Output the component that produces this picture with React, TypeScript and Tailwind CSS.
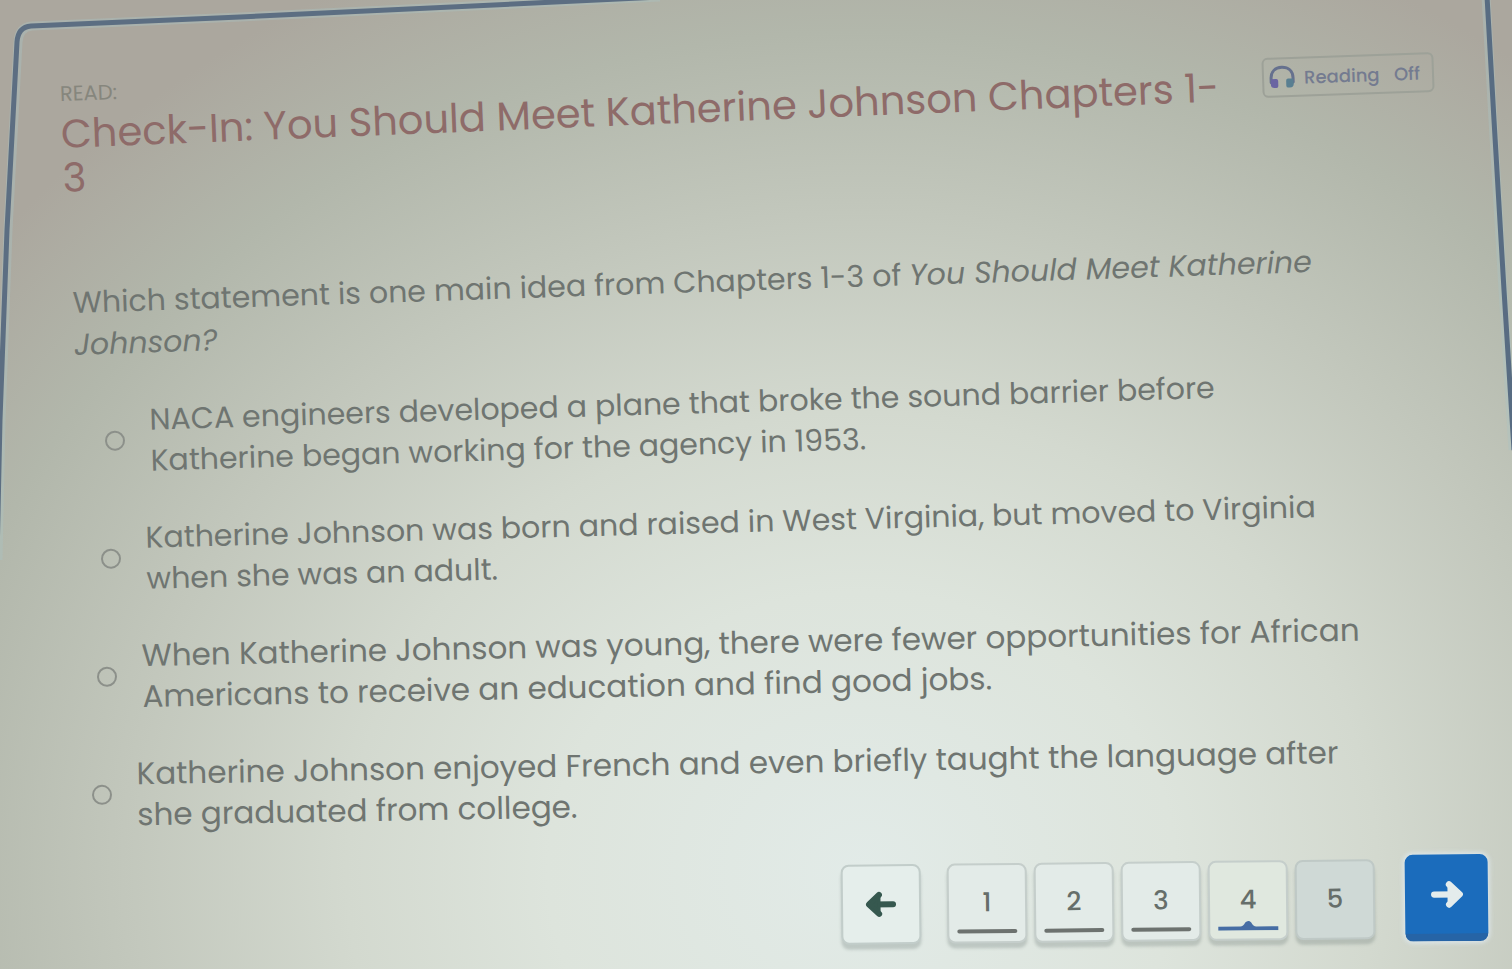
import { useState } from "react";

const options = [
  {
    id: "naca",
    lines: [
      "NACA engineers developed a plane that broke the sound barrier before",
      "Katherine began working for the agency in 1953.",
    ],
    row: "ml-[105px] -rotate-[1.7deg] text-[30px]",
  },
  {
    id: "virginia",
    lines: [
      "Katherine Johnson was born and raised in West Virginia, but moved to Virginia",
      "when she was an adult.",
    ],
    row: "ml-[101px] -rotate-[1.5deg] text-[30px]",
  },
  {
    id: "opportunities",
    lines: [
      "When Katherine Johnson was young, there were fewer opportunities for African",
      "Americans to receive an education and find good jobs.",
    ],
    row: "ml-[97px] -rotate-[1.2deg] text-[31px]",
  },
  {
    id: "french",
    lines: [
      "Katherine Johnson enjoyed French and even briefly taught the language after",
      "she graduated from college.",
    ],
    row: "ml-[92px] -rotate-[1deg] text-[31px]",
  },
];

function Headphones() {
  return (
    <svg viewBox="0 0 28 26" className="h-[26px] w-7 shrink-0" fill="none" aria-hidden="true">
      <path d="M3 18v-4C3 7 7.500 3 14 3s11 4 11 11v4" stroke="#66718e" strokeWidth="3" strokeLinecap="round" />
      <path d="M3 14.500h5a2 2 0 0 1 2 2v5a2 2 0 0 1-2 2H6.500a4 4 0 0 1-4-4z" fill="#6a64a2" />
      <path d="M25 14.500h-5a2 2 0 0 0-2 2v5a2 2 0 0 0 2 2h1.500a4 4 0 0 0 4-4z" fill="#597f91" />
    </svg>
  );
}

function Arrow({ className }: { className: string }) {
  return (
    <svg viewBox="0 0 32 28" className={className} fill="none" stroke="currentColor" strokeLinecap="round" strokeLinejoin="round" aria-hidden="true">
      <path d="M4 14h22" strokeWidth="6" />
      <path d="M18 4.500 28 14 18 23.500" strokeWidth="6" />
      <path d="M18 7v14l9-7z" fill="currentColor" strokeWidth="3" />
    </svg>
  );
}

function Frame() {
  return (
    <svg viewBox="0 0 1512 969" preserveAspectRatio="none" className="pointer-events-none absolute inset-0 h-full w-full" fill="none" aria-hidden="true">
      <path d="M-2 560 1 420 8 230 18 42Q19 27 32 26L240 17 660-3" stroke="#a9c4c4" strokeWidth="9" opacity="0.4" />
      <path d="M-3 560 0 420 7 230 17 42Q18 27 31 26L240 17 660-3" stroke="#5c6e82" strokeWidth="5" />
      <path d="M1486-4 1493 120 1503 290 1513 450" stroke="#a9c4c4" strokeWidth="9" opacity="0.4" />
      <path d="M1487-4 1494 120 1504 290 1514 450" stroke="#586c82" strokeWidth="5" />
    </svg>
  );
}

const pageBase =
  "relative flex h-20 w-20 items-center justify-center rounded-lg border-2 text-[26px] font-medium text-[#666e6a] shadow-[0_5px_3px_rgba(100,115,110,0.28)]";

export default function App() {
  const [answer, setAnswer] = useState("");
  return (
    <main className="relative min-h-screen overflow-hidden bg-[radial-gradient(ellipse_1120px_1000px_at_57%_90%,#e2ebe8_0%,#dde4dc_28%,#d3d9cf_46%,#c2c7bc_66%,#b2b7ab_84%,#aba79e_100%)] font-[Poppins,Inter,sans-serif] text-[#6f7571]">
      <Frame />
      <header className="relative flex items-start justify-between pt-[79px] pr-[78px] pb-[82px] pl-[60px]">
        <div>
          <p className="origin-left -rotate-2 text-[21px] leading-[30px] text-[#86867d]">READ:</p>
          <h1 className="mt-[3px] origin-top-left -rotate-[2.3deg] whitespace-nowrap text-[40px] leading-[44px] text-[#8e6b69]">
            Check-In: You Should Meet Katherine Johnson Chapters 1-
            <br />3
          </h1>
        </div>
        <button
          type="button"
          className="-mt-6 flex h-10 w-[172px] shrink-0 -rotate-2 items-center rounded-md border-2 border-[#9da198] px-1 text-[18px] font-medium text-[#747b90]"
        >
          <Headphones />
          <span className="ml-2">Reading</span>
          <span className="ml-auto mr-2">Off</span>
        </button>
      </header>

      <form className="relative">
        <fieldset>
          <legend className="ml-[72px] -mt-1 origin-top-left -rotate-[1.9deg] whitespace-nowrap text-[30px] leading-[42px]">
            Which statement is one main idea from Chapters 1-3 of <em>You Should Meet Katherine</em>
            <br />
            <em>Johnson?</em>
          </legend>
          <div className="mt-[34px] flex flex-col gap-9">
            {options.map((option) => (
              <label key={option.id} className={`flex origin-left items-center gap-[25px] ${option.row}`}>
                <input
                  type="radio"
                  name="answer"
                  value={option.id}
                  checked={answer === option.id}
                  onChange={() => setAnswer(option.id)}
                  className="h-5 w-5 shrink-0 appearance-none rounded-full border-2 border-[#8c908a] checked:border-[6px]"
                />
                <span className="whitespace-nowrap leading-[41px]">
                  {option.lines[0]}
                  <br />
                  {option.lines[1]}
                </span>
              </label>
            ))}
          </div>
        </fieldset>
      </form>

      <nav aria-label="Questions" className="relative mt-[18px] mr-6 flex -rotate-[0.6deg] origin-right items-center justify-end">
        <button type="button" aria-label="Previous question" className={`${pageBase} mr-[26px] border-[#c2cdca] bg-[#e5eeeb]`}>
          <Arrow className="h-7 w-8 rotate-180 text-[#36584f]" />
        </button>
        <div className="flex gap-[7px]">
          {[1, 2, 3].map((n) => (
            <button key={n} type="button" className={`${pageBase} border-[#c5cecb] bg-[#e3ebe8]`}>
              {n}
              <span className="absolute inset-x-2 bottom-2 h-1 rounded-full bg-[#6d726f]" />
            </button>
          ))}
          <button type="button" aria-current="page" className={`${pageBase} border-[#c5cecb] bg-[#e0e8df]`}>
            4
            <svg viewBox="0 0 62 10" className="absolute bottom-2 h-[10px] w-[62px]" fill="#466da4" aria-hidden="true">
              <path d="M1 6h22q3 0 5-4 3-3 6 0 2 4 5 4h22v4H1z" />
            </svg>
          </button>
          <button type="button" className={`${pageBase} border-[#bfc9c6] bg-[#cfd9d6]`}>
            5
          </button>
        </div>
        <button
          type="button"
          aria-label="Next question"
          className="ml-[30px] flex h-[87px] w-[83px] items-center justify-center rounded-lg border-b-8 border-[#2664a6] bg-[#1b6cbc] text-[#e4ecec] shadow-[0_0_4px_2px_rgba(225,236,245,0.7)]"
        >
          <Arrow className="h-[30px] w-[34px]" />
        </button>
      </nav>
    </main>
  );
}
